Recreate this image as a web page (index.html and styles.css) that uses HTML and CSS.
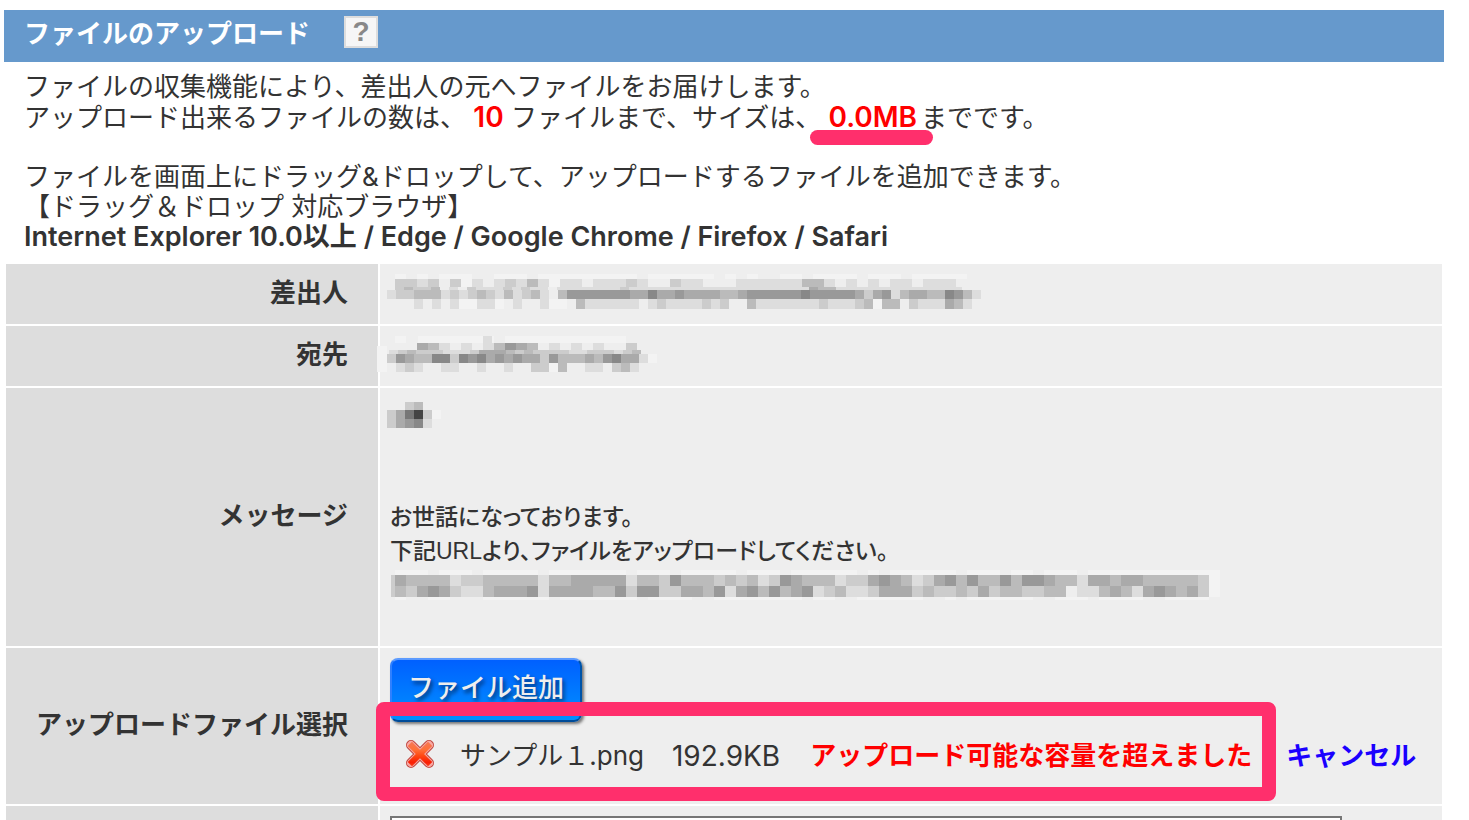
FILE: index.html
```html
<!DOCTYPE html>
<html lang="ja">
<head>
    <meta charset="UTF-8">
    <meta name="viewport" content="width=device-width, initial-scale=1.0">
    <title>ファイルのアップロード</title>
    <link rel="stylesheet" href="styles.css">
</head>
<body>
    <header class="title-bar">
        <h1>ファイルのアップロード</h1>
        <button type="button" class="help" aria-label="ヘルプ">?</button>
    </header>

    <div class="intro">
        <p>ファイルの収集機能により、差出人の元へファイルをお届けします。</p>
        <p>アップロード出来るファイルの数は、 <b class="limit">10</b> ファイルまで、サイズは、 <b class="limit marked">0.0MB</b>までです。</p>
        <p class="drag">ファイルを画面上にドラッグ&amp;ドロップして、アップロードするファイルを追加できます。</p>
        <p>【ドラッグ＆ドロップ 対応ブラウザ】</p>
        <p class="browsers">Internet Explorer 10.0以上 / Edge / Google Chrome / Firefox / Safari</p>
    </div>

    <table class="form">
        <tr class="short">
            <th scope="row">差出人</th>
            <td><svg class="mosaic" data-name="sender" width="606" height="36"></svg></td>
        </tr>
        <tr class="short">
            <th scope="row">宛先</th>
            <td><svg class="mosaic" data-name="recipient" width="290" height="36"></svg></td>
        </tr>
        <tr>
            <th scope="row">メッセージ</th>
            <td class="message">
                <p><svg class="mosaic" data-name="name" width="60" height="34"></svg></p>
                <p class="body-text">お世話になっております。</p>
                <p>下記URLより、ファイルをアップロードしてください。</p>
                <p><svg class="mosaic" data-name="url" width="850" height="34"></svg></p>
            </td>
        </tr>
        <tr class="files">
            <th scope="row">アップロードファイル選択</th>
            <td>
                <button type="button" class="add">ファイル追加</button>
                <div class="file-row">
                    <div class="file">
                        <svg class="cross" width="32" height="34" viewBox="0 0 32 34">
                            <defs>
                                <linearGradient id="red" gradientUnits="userSpaceOnUse" x1="0" y1="1" x2="0" y2="29">
                                    <stop offset="0" stop-color="#f47a5c"/>
                                    <stop offset="0.35" stop-color="#ff7038"/>
                                    <stop offset="0.55" stop-color="#ff4a14"/>
                                    <stop offset="0.8" stop-color="#f91e04"/>
                                    <stop offset="1" stop-color="#ff4a20"/>
                                </linearGradient>
                            </defs>
                            <g fill="none" stroke-linecap="square">
                                <path d="M7 6 L25 24 M25 6 L7 24" stroke="#c0463e" stroke-width="10" stroke-linecap="round"/>
                                <path d="M7 6 L25 24 M25 6 L7 24" stroke="#f7a8a4" stroke-width="8" stroke-linecap="round"/>
                                <path d="M8 7 L24 23 M24 7 L8 23" stroke="url(#red)" stroke-width="6"/>
                            </g>
                        </svg>
                        <span class="file-name">サンプル１.png</span>
                        <span class="file-size">192.9KB</span>
                        <b class="error">アップロード可能な容量を超えました</b>
                    </div>
                    <a href="#" class="cancel">キャンセル</a>
                </div>
            </td>
        </tr>
        <tr class="comment">
            <th></th>
            <td><textarea aria-label="コメント" rows="3"></textarea></td>
        </tr>
    </table>

    <script>
        // 伏せ字のモザイク: [x, y, セル幅, 高さ, 濃さ(16進)]
        const mosaics = {
            sender: [
                [8, 0, 11, 5, 'fefefffeefffefffffffffeffffffefefeeffeffffefffefffff'],
                [8, 5, 11, 8, 'ccdcecfdedcdbdfddedddcdeecddeeeddddddbbdedededdeddde'],
                [8, 13, 9, 3, 'cbccbedecdddcdcddedddddddcddddddddddddddddddddabbdddddddddddddd'],
                [0, 16, 9, 9, 'dccbbbdcdcbcdbdcbdeb9999999aa8aa9aaaabba999999899999aca9dbaabb89bd'],
                [0, 25, 9, 10, 'eeedededffddfedeedffebddddddedcddddcdceebdddddddcdddcbfbbecdddabde']
            ],
            recipient: [
                [8, 0, 11, 7, 'fefffffffefffffffffffe'],
                [22, 0, 9, 7, 'e'],
                [96, 0, 9, 7, 'd'],
                [8, 7, 11, 8, 'eeabdededb9abedededeec'],
                [-10, 10, 10, 26, 'f'],
                [2, 14, 9, 5, 'dcbcccdddcaaabcbccccddcccdcb'],
                [0, 18, 9, 9, 'c9abb88c898a9a9aac9bbbab98aadf'],
                [0, 27, 9, 9, 'edcdeeddeedeedeeccfbeeddecbde']
            ],
            name: [
                [0, 4, 9, 8, 'eecbe'],
                [0, 12, 9, 9, 'ca74cf'],
                [0, 21, 9, 9, 'ca98d']
            ],
            url: [
                [4, 2, 11, 5, 'fffefffefffffefffffffefffefffffefffeffffffefeffffffefffeffefffeffffffffffff'],
                [0, 7, 4, 22, 'c'],
                [4, 7, 11, 11, 'abbbbdccbbbbbdbbaaaaadbbc9bbbcbcbdc9abbbdcca9abdca9b9bb9b99abbdaabaabbbbbcf'],
                [4, 18, 11, 11, 'bca9acddbaaa9daaaabb9c99ccaab9da9b9ba9dcbddcaaacbccbcacbbccbbeddbabda9abacf'],
                [4, 29, 11, 3, 'feeffeeeffffffefffffffeffffeeffffffffeffeeffffffeefeffffffeefffeffffeeffff']
            ]
        };

        document.querySelectorAll('.mosaic').forEach(svg => {
            mosaics[svg.dataset.name].forEach(([x, y, w, h, cells]) => {
                [...cells].forEach((c, i) => {
                    const rect = document.createElementNS('http://www.w3.org/2000/svg', 'rect');
                    rect.setAttribute('x', x + i * w);
                    rect.setAttribute('y', y);
                    rect.setAttribute('width', w);
                    rect.setAttribute('height', h);
                    rect.setAttribute('fill', c === 'f' ? '#f3f3f3' : '#' + c + c + c);
                    svg.appendChild(rect);
                });
            });
        });
    </script>
</body>
</html>
```
FILE: styles.css
```css
* {
    box-sizing: border-box;
}

body {
    height: 100vh;
    margin: 0;
    padding: 10px 25px 0 4px;
    overflow: hidden;
    background-color: #fff;
    color: #333;
    font-family: Inter, "Noto Sans CJK JP", sans-serif;
    font-size: 26px;
    line-height: 30px;
}

p {
    margin: 0;
}

.title-bar {
    display: flex;
    align-items: flex-start;
    gap: 34px;
    height: 52px;
    padding: 6px 20px;
    background-color: #6699cc;
    color: #fff;
}

.title-bar h1 {
    margin: 0;
    font-size: 26px;
    line-height: 36px;
}

.help {
    width: 34px;
    height: 32px;
    padding: 0;
    border: 2px solid #ddd;
    background-color: #f6f6f6;
    color: #888;
    font: bold 28px/28px "Liberation Sans", sans-serif;
}

.intro {
    padding: 10px 20px;
}

.intro p {
    height: 30px;
}

.drag {
    margin-top: 30px;
}

.limit {
    color: #f00;
    font-size: 28px;
    font-weight: 600;
}

.marked {
    position: relative;
    margin-right: 4px;
}

.marked::after {
    content: "";
    position: absolute;
    left: -18px;
    right: -16px;
    top: 30px;
    height: 15px;
    border-radius: 8px;
    background-color: #ff2f6c;
}

.browsers {
    font-size: 27px;
    font-weight: 600;
}

.form {
    width: 100%;
    border-collapse: separate;
    border-spacing: 2px;
}

.form th {
    width: 372px;
    padding: 0 30px 2px 0;
    background-color: #ddd;
    text-align: right;
}

.form td {
    padding: 10px;
    background-color: #eee;
    vertical-align: top;
}

.form .short {
    height: 60px;
}

.mosaic {
    display: block;
    overflow: visible;
    margin-left: -3px;
}

.message p {
    min-height: 34px;
    font-family: "Liberation Sans", "Noto Sans CJK JP", sans-serif;
    font-size: 23px;
    font-weight: 500;
    line-height: 34px;
    font-feature-settings: "palt";
}

.form .message {
    padding-bottom: 44px;
}

.message .body-text {
    margin-top: 68px;
}

.message p:last-child .mosaic {
    margin-left: 1px;
}

.files {
    height: 156px;
}

.form .files td {
    padding-bottom: 0;
}

.add {
    display: block;
    height: 64px;
    padding: 0 16px 4px;
    border: 2px solid;
    border-color: #5c9bff #0054a8 #004c99 #2f80ff;
    border-radius: 8px;
    background: linear-gradient(#0060ff, #0090ff);
    box-shadow: 2px 2px 3px rgba(0, 0, 0, 0.5);
    color: #eee;
    font: inherit;
    font-weight: 500;
    text-shadow: 2px 3px 4px rgba(0, 0, 0, 0.6);
}

.file-row {
    display: flex;
    align-items: center;
    gap: 34px;
    height: 68px;
    white-space: nowrap;
}

.file {
    position: relative;
    display: flex;
    align-items: center;
    padding-left: 14px;
}

.file::after {
    content: "";
    position: absolute;
    top: -37px;
    right: -24px;
    bottom: -28px;
    left: -14px;
    border: 14px solid #ff2f6c;
    border-radius: 8px;
    pointer-events: none;
}

.file-name {
    margin-left: 24px;
}

.file-size {
    margin: 0 30px 0 28px;
    font-size: 28px;
}

.error {
    color: #f00;
}

.cancel {
    color: #1a00ff;
    font-weight: bold;
    text-decoration: none;
}

.comment textarea {
    display: block;
    width: 952px;
    max-width: 100%;
    border: 2px solid #767676;
    background-color: #fff;
    resize: none;
}
```
